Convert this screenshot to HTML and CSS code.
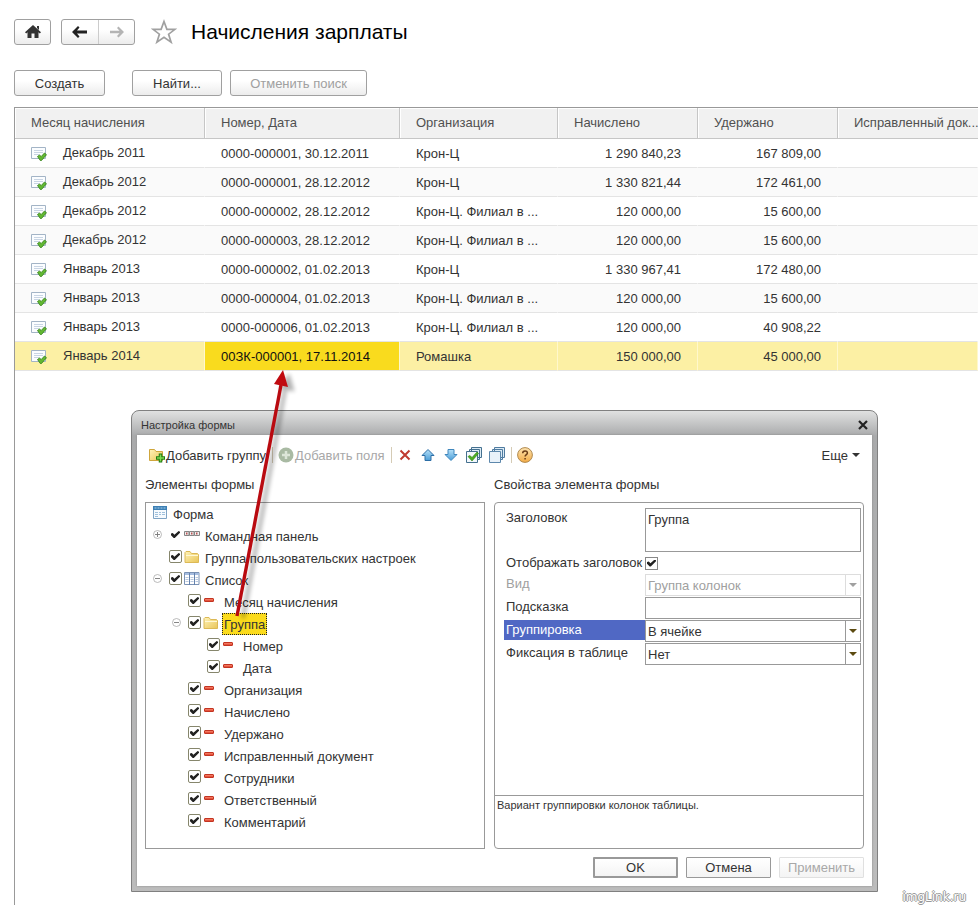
FILE: index.html
```
<!DOCTYPE html>
<html lang="ru">
<head>
    <meta charset="UTF-8">
    <meta name="viewport" content="width=device-width, initial-scale=1.0">
    <title>Начисления зарплаты</title>
    <link rel="stylesheet" href="styles.css">
</head>
<body>

    <svg class="sprite" width="0" height="0" aria-hidden="true">
        <defs>
            <linearGradient id="gFolder" x1="0" y1="0" x2="1" y2="1">
                <stop offset="0" stop-color="#fff3b8"/>
                <stop offset="1" stop-color="#e9c558"/>
            </linearGradient>
            <linearGradient id="gBlue" x1="0" y1="0" x2="0" y2="1">
                <stop offset="0" stop-color="#b5e0f8"/>
                <stop offset="1" stop-color="#4b9ed8"/>
            </linearGradient>
            <linearGradient id="gRed" x1="0" y1="0" x2="0" y2="1">
                <stop offset="0" stop-color="#ff9a80"/>
                <stop offset="1" stop-color="#d8321c"/>
            </linearGradient>
            <linearGradient id="gHelp" x1="0" y1="0" x2="0" y2="1">
                <stop offset="0" stop-color="#fde3b0"/>
                <stop offset="1" stop-color="#f3ab45"/>
            </linearGradient>
        </defs>
        <symbol id="doc" viewBox="0 0 16 14">
            <path d="M.5 .5h14v11h-14z" fill="#fbfdff" stroke="#a3b4c6"/>
            <path d="M3 3.500h9M3 5.500h9M3 7.500h5" stroke="#c9d5e4"/>
            <path d="M6.500 9.500l2-1.500 1.700 1.500 3.300-3.500 2 1.700-5 5.800h-1.200z" fill="#62b832" stroke="#2f7d14" stroke-width=".8"/>
        </symbol>
        <symbol id="folder" viewBox="0 0 16 14">
            <path d="M1 12.500V2.500l1-1h4l1.500 2h6l1 1v8z" fill="url(#gFolder)" stroke="#dcb956"/>
            <path d="M2 5.500h12" stroke="#fff8d6"/>
        </symbol>
        <symbol id="bar" viewBox="0 0 16 14">
            <rect x="1.500" y="4.500" width="9" height="3" rx=".5" fill="url(#gRed)" stroke="#c33422"/>
        </symbol>
        <symbol id="form" viewBox="0 0 16 14">
            <path d="M1.500 .5h13v12h-13z" fill="#f6fafe" stroke="#7fa3c4"/>
            <path d="M1 0h14v4H1z" fill="#3c7fb4"/>
            <path d="M2.500 2h11" stroke="#a8d3ee" stroke-dasharray="2 1"/>
            <path d="M3 6.500h3M7 6.500h2M10 6.500h3M3 8.500h3M7 8.500h2M10 8.500h3M3 10.500h3" stroke="#9fc0dc"/>
        </symbol>
        <symbol id="panel" viewBox="0 0 16 14">
            <path d="M.5 3.500h4.500v4h-4.500zM5.500 3.500h4.500v4h-4.500zM10.500 3.500h5v4h-5z" fill="#eee" stroke="#858585"/>
            <path d="M2 5.500h1.500M7 5.500h1.500M12 5.500h1.500" stroke="#b55" stroke-width="2"/>
        </symbol>
        <symbol id="list" viewBox="0 0 16 14">
            <path d="M.5 .5h14.500v12h-14.500z" fill="#fff" stroke="#7b92b4"/>
            <path d="M1 1h14v2H1z" fill="#a6bde0"/>
            <path d="M5.500 1v12M10.500 1v12" stroke="#6482ad"/>
            <path d="M1.500 5.500h3M6.500 5.500h3M11.500 5.500h3M1.500 7.500h3M6.500 7.500h3M11.500 7.500h3M1.500 9.500h3M6.500 9.500h3M11.500 9.500h3" stroke="#b9c8de"/>
        </symbol>
        <symbol id="plus" viewBox="0 0 9 9">
            <circle cx="4.500" cy="4.500" r="4" fill="#fff" stroke="#aaa" stroke-width=".8"/>
            <path d="M2 4.500h5M4.500 2v5" stroke="#777" stroke-width=".9"/>
        </symbol>
        <symbol id="minus" viewBox="0 0 9 9">
            <circle cx="4.500" cy="4.500" r="4" fill="#fff" stroke="#aaa" stroke-width=".8"/>
            <path d="M2 4.500h5" stroke="#777" stroke-width=".9"/>
        </symbol>
        <symbol id="caret" viewBox="0 0 8 4">
            <path d="M0 0h8l-4 4z" fill="currentColor"/>
        </symbol>
    </svg>

    <header class="topbar">
        <button class="btn nav-btn" aria-label="Домой">
            <svg width="16" height="14" viewBox="0 0 16 14"><path d="M8 0l8 7.200-1.200 1.200-1.300-1.100V13H9.500V8.500h-3V13h-4V7.300L1.200 8.400 0 7.200zM12 1h2v4l-2-2z" fill="#333"/></svg>
        </button>
        <div class="nav-pair">
            <button aria-label="Назад">
                <svg width="16" height="12" viewBox="0 0 16 12"><path d="M6 0L0 6l6 6 1.500-1.500L5 7.500h10v-3H5L7.500 1.500z" fill="#222"/></svg>
            </button>
            <button aria-label="Вперед" disabled>
                <svg width="16" height="12" viewBox="0 0 16 12"><path d="M9.500 0.500L15 6l-5.500 5.500L8 10l2.500-2.800H1V4.800h9.500L8 2z" fill="#b4b4b4"/></svg>
            </button>
        </div>
        <svg class="star" width="26" height="26" viewBox="0 0 26 26"><path d="M13 2.500l2.900 7.800h8.100l-6.400 4.900 2.500 8-7.100-4.900-7.100 4.900 2.500-8L2 10.300h8.100z" fill="#fff" stroke="#a0a0a0" stroke-width="1.700"/></svg>
        <h1>Начисления зарплаты</h1>
    </header>

    <div class="commands">
        <button class="btn create">Создать</button>
        <button class="btn find">Найти...</button>
        <button class="btn cancel-find" disabled>Отменить поиск</button>
    </div>

    <main class="list">
        <table>
            <colgroup>
                <col class="c-month">
                <col class="c-number">
                <col class="c-org">
                <col class="c-sum">
                <col class="c-sum">
                <col>
            </colgroup>
            <thead>
                <tr>
                    <th>Месяц начисления</th>
                    <th>Номер, Дата</th>
                    <th>Организация</th>
                    <th>Начислено</th>
                    <th>Удержано</th>
                    <th class="last">Исправленный док...</th>
                </tr>
            </thead>
            <tbody>
                <tr>
                    <td><svg class="doc"><use href="#doc"/></svg>Декабрь 2011</td>
                    <td>0000-000001, 30.12.2011</td>
                    <td>Крон-Ц</td>
                    <td class="num">1 290 840,23</td>
                    <td class="num">167 809,00</td>
                    <td></td>
                </tr>
                <tr>
                    <td><svg class="doc"><use href="#doc"/></svg>Декабрь 2012</td>
                    <td>0000-000001, 28.12.2012</td>
                    <td>Крон-Ц</td>
                    <td class="num">1 330 821,44</td>
                    <td class="num">172 461,00</td>
                    <td></td>
                </tr>
                <tr>
                    <td><svg class="doc"><use href="#doc"/></svg>Декабрь 2012</td>
                    <td>0000-000002, 28.12.2012</td>
                    <td>Крон-Ц. Филиал в ...</td>
                    <td class="num">120 000,00</td>
                    <td class="num">15 600,00</td>
                    <td></td>
                </tr>
                <tr>
                    <td><svg class="doc"><use href="#doc"/></svg>Декабрь 2012</td>
                    <td>0000-000003, 28.12.2012</td>
                    <td>Крон-Ц. Филиал в ...</td>
                    <td class="num">120 000,00</td>
                    <td class="num">15 600,00</td>
                    <td></td>
                </tr>
                <tr>
                    <td><svg class="doc"><use href="#doc"/></svg>Январь 2013</td>
                    <td>0000-000002, 01.02.2013</td>
                    <td>Крон-Ц</td>
                    <td class="num">1 330 967,41</td>
                    <td class="num">172 480,00</td>
                    <td></td>
                </tr>
                <tr>
                    <td><svg class="doc"><use href="#doc"/></svg>Январь 2013</td>
                    <td>0000-000004, 01.02.2013</td>
                    <td>Крон-Ц. Филиал в ...</td>
                    <td class="num">120 000,00</td>
                    <td class="num">15 600,00</td>
                    <td></td>
                </tr>
                <tr>
                    <td><svg class="doc"><use href="#doc"/></svg>Январь 2013</td>
                    <td>0000-000006, 01.02.2013</td>
                    <td>Крон-Ц. Филиал в ...</td>
                    <td class="num">120 000,00</td>
                    <td class="num">40 908,22</td>
                    <td></td>
                </tr>
                <tr class="selected">
                    <td><svg class="doc"><use href="#doc"/></svg>Январь 2014</td>
                    <td class="current">00ЗК-000001, 17.11.2014</td>
                    <td>Ромашка</td>
                    <td class="num">150 000,00</td>
                    <td class="num">45 000,00</td>
                    <td></td>
                </tr>
            </tbody>
        </table>
    </main>

    <section class="dialog" role="dialog" aria-labelledby="dialogTitle">
        <div class="dialog-title">
            <span id="dialogTitle">Настройка формы</span>
            <button class="close" aria-label="Закрыть">
                <svg width="10" height="10" viewBox="0 0 10 10"><path d="M1 1l8 8M9 1l-8 8" stroke="#222" stroke-width="2.200"/></svg>
            </button>
        </div>

        <div class="dialog-body">
            <div class="toolbar">
                <button class="tool">
                    <svg width="16" height="16" viewBox="0 0 16 16"><path d="M.5 13.500v-11h5l1.500 2h6.500v9z" fill="url(#gFolder)" stroke="#cfa63c"/><path d="M11.500 6.500v9M7 11h9" stroke="#1f7a12" stroke-width="3.500"/><path d="M11.500 7.500v7M8 11h7" stroke="#7fdc50" stroke-width="1.500"/></svg>
                    <span>Добавить группу</span>
                </button>
                <i class="sep"></i>
                <button class="tool" disabled>
                    <svg width="16" height="16" viewBox="0 0 16 16"><circle cx="8" cy="8" r="7.500" fill="#a9baa3"/><path d="M8 4v8M4 8h8" stroke="#dce6d8" stroke-width="2.500"/></svg>
                    <span>Добавить поля</span>
                </button>
                <i class="sep"></i>
                <div class="tool-icons">
                    <button class="tool" aria-label="Удалить">
                        <svg width="16" height="16" viewBox="0 0 16 16"><path d="M3.500 3.500l9 9M12.500 3.500l-9 9" stroke="#c03a30" stroke-width="2"/></svg>
                    </button>
                    <button class="tool" aria-label="Вверх">
                        <svg width="16" height="16" viewBox="0 0 16 16"><path d="M8 2.500l6 6h-3v5H5v-5H2z" fill="url(#gBlue)" stroke="#2c6ea6"/></svg>
                    </button>
                    <button class="tool" aria-label="Вниз">
                        <svg width="16" height="16" viewBox="0 0 16 16"><path d="M8 13.500l6-6h-3v-5H5v5H2z" fill="url(#gBlue)" stroke="#4087bd"/></svg>
                    </button>
                    <button class="tool" aria-label="Установить флажки">
                        <svg width="16" height="16" viewBox="0 0 16 16"><path d="M5.500 .5h10v10h-10zM3.500 2.500h10v10h-10z" fill="#dcebf5" stroke="#44708f"/><path d="M.5 4.500h11v11H.5z" fill="#f3f8fc" stroke="#44708f"/><path d="M2 9.500l2-1 2 2 5-5.500 1.500 1.500L6 14z" fill="#4cae24" stroke="#2d7d12" stroke-width=".6"/></svg>
                    </button>
                    <button class="tool" aria-label="Снять флажки">
                        <svg width="16" height="16" viewBox="0 0 16 16"><path d="M5.500 .5h10v10h-10zM3.500 2.500h10v10h-10z" fill="#dcebf5" stroke="#4f7ba0"/><path d="M.5 4.500h11v11H.5z" fill="#e9f2fa" stroke="#5d88ac"/></svg>
                    </button>
                </div>
                <i class="sep"></i>
                <button class="tool" aria-label="Справка">
                    <svg width="16" height="16" viewBox="0 0 16 16"><circle cx="8" cy="8" r="7.400" fill="url(#gHelp)" stroke="#b08a50"/><path d="M5.700 6.200c0-3 4.700-3 4.700-.2 0 1.700-2.300 1.700-2.300 3.600M8.100 11v1.600" fill="none" stroke="#6b3d16" stroke-width="1.500"/></svg>
                </button>
                <button class="tool more">Еще <svg class="caret"><use href="#caret"/></svg></button>
            </div>

            <div class="panes">
                <div class="pane">
                    <h2>Элементы формы</h2>
                    <ul class="tree">
                        <li class="root"><svg class="ico"><use href="#form"/></svg><span class="name">Форма</span></li>
                        <li class="lvl1"><svg class="exp"><use href="#plus"/></svg><input type="checkbox" class="bare" id="t1" checked><svg class="ico"><use href="#panel"/></svg><label class="name" for="t1">Командная панель</label></li>
                        <li class="lvl1"><i class="exp"></i><input type="checkbox" id="t2" checked><svg class="ico"><use href="#folder"/></svg><label class="name" for="t2">Группа пользовательских настроек</label></li>
                        <li class="lvl1"><svg class="exp"><use href="#minus"/></svg><input type="checkbox" id="t3" checked><svg class="ico"><use href="#list"/></svg><label class="name" for="t3">Список</label></li>
                        <li class="lvl2"><i class="exp"></i><input type="checkbox" id="t4" checked><svg class="ico"><use href="#bar"/></svg><label class="name" for="t4">Месяц начисления</label></li>
                        <li class="lvl2"><svg class="exp"><use href="#minus"/></svg><input type="checkbox" id="t5" checked><svg class="ico"><use href="#folder"/></svg><label class="name active" for="t5">Группа</label></li>
                        <li class="lvl3"><i class="exp"></i><input type="checkbox" id="t6" checked><svg class="ico"><use href="#bar"/></svg><label class="name" for="t6">Номер</label></li>
                        <li class="lvl3"><i class="exp"></i><input type="checkbox" id="t7" checked><svg class="ico"><use href="#bar"/></svg><label class="name" for="t7">Дата</label></li>
                        <li class="lvl2"><i class="exp"></i><input type="checkbox" id="t8" checked><svg class="ico"><use href="#bar"/></svg><label class="name" for="t8">Организация</label></li>
                        <li class="lvl2"><i class="exp"></i><input type="checkbox" id="t9" checked><svg class="ico"><use href="#bar"/></svg><label class="name" for="t9">Начислено</label></li>
                        <li class="lvl2"><i class="exp"></i><input type="checkbox" id="t10" checked><svg class="ico"><use href="#bar"/></svg><label class="name" for="t10">Удержано</label></li>
                        <li class="lvl2"><i class="exp"></i><input type="checkbox" id="t11" checked><svg class="ico"><use href="#bar"/></svg><label class="name" for="t11">Исправленный документ</label></li>
                        <li class="lvl2"><i class="exp"></i><input type="checkbox" id="t12" checked><svg class="ico"><use href="#bar"/></svg><label class="name" for="t12">Сотрудники</label></li>
                        <li class="lvl2"><i class="exp"></i><input type="checkbox" id="t13" checked><svg class="ico"><use href="#bar"/></svg><label class="name" for="t13">Ответственный</label></li>
                        <li class="lvl2"><i class="exp"></i><input type="checkbox" id="t14" checked><svg class="ico"><use href="#bar"/></svg><label class="name" for="t14">Комментарий</label></li>
                    </ul>
                </div>

                <div class="pane">
                    <h2>Свойства элемента формы</h2>
                    <div class="props">
                        <div class="fields-grid">
                            <label for="caption">Заголовок</label>
                            <textarea id="caption">Группа</textarea>
                            <label for="showCaption">Отображать заголовок</label>
                            <input type="checkbox" id="showCaption" class="square" checked>
                            <label class="off" for="kind">Вид</label>
                            <div class="combo off">
                                <select id="kind" disabled><option>Группа колонок</option></select>
                                <span class="drop"><svg class="caret"><use href="#caret"/></svg></span>
                            </div>
                            <label for="hint">Подсказка</label>
                            <input type="text" id="hint">
                            <label class="picked" for="grouping">Группировка</label>
                            <div class="combo">
                                <select id="grouping"><option>В ячейке</option></select>
                                <span class="drop"><svg class="caret"><use href="#caret"/></svg></span>
                            </div>
                            <label for="fixing">Фиксация в таблице</label>
                            <div class="combo">
                                <select id="fixing"><option>Нет</option></select>
                                <span class="drop"><svg class="caret"><use href="#caret"/></svg></span>
                            </div>
                        </div>
                        <p class="about">Вариант группировки колонок таблицы.</p>
                    </div>
                </div>
            </div>

            <div class="dialog-buttons">
                <button class="default">OK</button>
                <button>Отмена</button>
                <button disabled>Применить</button>
            </div>
        </div>
    </section>

    <svg class="arrow" width="80" height="270" viewBox="0 0 80 270" aria-hidden="true">
        <g class="arrow-shade">
            <path d="M18 253L60 24" stroke-width="4"/>
            <path d="M64 9l5 17-14-3z"/>
        </g>
        <path d="M12 251L56 20" stroke="#b90a10" stroke-width="3.400"/>
        <path d="M58 5l5 17-14-3z" fill="#c00a10"/>
    </svg>

    <div class="watermark">imgLink.ru</div>

</body>
</html>
```
FILE: styles.css
```
* {
    box-sizing: border-box;
}

body {
    margin: 0;
    min-height: 100vh;
    display: flex;
    flex-direction: column;
    padding: 19px 0 0 14px;
    background-color: #fff;
    color: #333;
    font-family: "Liberation Sans", Arial, sans-serif;
    font-size: 13px;
    overflow-x: hidden;
    position: relative;
}

button, input, select, textarea {
    font: inherit;
    color: inherit;
    margin: 0;
}

svg {
    display: block;
    flex: none;
}

.sprite {
    position: absolute;
}

/* top bar */

.topbar {
    display: flex;
    align-items: center;
    height: 26px;
}

.topbar h1 {
    margin: 0 0 0 14px;
    font-size: 21px;
    font-weight: normal;
    color: #000;
}

.btn, .nav-pair {
    border: 1px solid #a0a0a0;
    border-radius: 3px;
    background: linear-gradient(#fff 40%, #ececec);
}

.btn {
    height: 26px;
    padding: 0 10px;
    white-space: nowrap;
}

.btn:disabled {
    color: #a0a0a0;
}

.nav-btn {
    width: 37px;
}

.nav-pair {
    display: flex;
    height: 26px;
    margin-left: 10px;
}

.nav-pair button {
    width: 36px;
    padding: 0 10px;
    border: 0;
    background: none;
}

.nav-pair button + button {
    border-left: 1px solid #ccc;
}

.star {
    margin-left: 16px;
}

.commands {
    display: flex;
    margin: 25px 0 11px;
}

.create {
    width: 91px;
    margin-right: 27px;
}

.find {
    width: 90px;
    margin-right: 8px;
}

.cancel-find {
    width: 137px;
}

/* list */

.list {
    flex: 1;
    border-top: 1px solid #999;
    border-left: 1px solid #999;
}

table {
    width: 100%;
    table-layout: fixed;
    border-collapse: separate;
    border-spacing: 0;
}

.c-month {
    width: 190px;
}

.c-number {
    width: 195px;
}

.c-org {
    width: 158px;
}

.c-sum {
    width: 140px;
}

th, td {
    padding: 0 16px;
    white-space: nowrap;
    overflow: hidden;
}

th {
    height: 31px;
    padding-bottom: 2px;
    background-color: #f1f1f1;
    border-right: 1px solid #c6c6c6;
    border-bottom: 1px solid #c6c6c6;
    box-shadow: inset 1px 1px #fff;
    color: #505050;
    font-weight: normal;
    text-align: left;
}

th.last {
    padding-right: 0;
    border-right: 0;
}

td {
    height: 29px;
    border-right: 1px solid transparent;
    border-bottom: 1px solid #e4e4e4;
}

tbody tr:nth-child(even) {
    background-color: #fafafa;
}

tbody tr.selected {
    background-color: #fcf0a4;
}

.selected td {
    border-right-color: #fff8cc;
}

.selected td.current {
    background-color: #f9db1e;
    color: #111;
}

.num {
    text-align: right;
}

.doc {
    display: inline-block;
    width: 16px;
    height: 14px;
    margin-right: 16px;
    vertical-align: -4px;
}

/* dialog window */

.dialog {
    position: absolute;
    left: 131px;
    right: 100px;
    top: 410px;
    padding: 0 5px 5px;
    border: 1px solid #808080;
    border-radius: 8px 8px 0 0;
    background: linear-gradient(#e0e1e1, #a9aaab 25px, #bcbcbc);
}

.dialog-title {
    display: flex;
    justify-content: space-between;
    align-items: center;
    height: 24px;
    padding: 3px 4px 0;
    font-size: 11px;
}

.close {
    padding: 0;
    border: 0;
    background: none;
}

.dialog-body {
    padding: 10px 8px 8px;
    background-color: #fff;
    box-shadow: 0 0 2px #888;
}

.toolbar {
    display: flex;
    align-items: center;
    height: 20px;
    padding-left: 4px;
}

.tool {
    display: flex;
    align-items: center;
    gap: 1px;
    padding: 0;
    border: 0;
    background: none;
    white-space: nowrap;
}

.tool:disabled {
    color: #a8a8a8;
}

.sep {
    width: 1px;
    height: 16px;
    margin: 0 5px 0 6px;
    background-color: #d5cbb5;
}

.tool-icons {
    display: flex;
    gap: 7px;
}

.more {
    gap: 4px;
    margin: 0 4px 0 auto;
}

.caret {
    width: 8px;
    height: 4px;
}

.panes {
    display: grid;
    grid-template-columns: 340fr 370fr;
    gap: 9px;
}

.pane {
    display: flex;
    flex-direction: column;
}

.pane h2 {
    margin: 12px 0 9px;
    font-size: 13px;
    line-height: 16px;
    font-weight: normal;
}

.tree, .props {
    flex: 1;
    margin: 0;
    border: 1px solid #999;
}

.tree {
    min-height: 347px;
    padding: 0;
    list-style: none;
}

.tree li {
    display: flex;
    align-items: flex-start;
    height: 22px;
}

.root {
    padding-left: 4px;
}

.lvl1 {
    padding-left: 7px;
}

.lvl2 {
    padding-left: 26px;
}

.lvl3 {
    padding-left: 45px;
}

.exp {
    width: 9px;
    height: 9px;
    margin: 5px 7px 0 0;
}

.ico {
    width: 16px;
    height: 14px;
    margin: 3px 3px 0 2px;
}

.name {
    height: 22px;
    padding: 0 1px;
    border: 1px solid transparent;
    line-height: 21px;
}

.name.active {
    background-color: #fbdb1c;
    border: 1px dotted #222;
}

input[type="checkbox"] {
    appearance: none;
    flex: none;
    display: grid;
    place-items: center;
    width: 13px;
    height: 13px;
    border: 1px solid #86866c;
    border-radius: 2px;
    background-color: #fff;
}

.tree input[type="checkbox"] {
    margin-top: 3px;
}

input[type="checkbox"]:checked::before {
    content: "";
    width: 9px;
    height: 7px;
    background-color: #222;
    clip-path: polygon(0 35%, 20% 30%, 38% 55%, 85% 0, 100% 10%, 100% 25%, 42% 100%, 30% 100%, 0 60%);
}

input[type="checkbox"].bare {
    border-color: transparent;
}

input[type="checkbox"].square {
    align-self: center;
    border-color: #888;
    border-radius: 0;
}

/* element properties */

.props {
    display: flex;
    flex-direction: column;
    border-radius: 4px;
}

.fields-grid {
    flex: 1;
    display: grid;
    grid-template-columns: 141px 1fr;
    grid-template-rows: 44px 20px repeat(4, 22px);
    row-gap: 1px;
    padding: 5px 2px 0 9px;
}

.fields-grid label {
    height: 20px;
    padding-left: 2px;
    line-height: 20px;
    white-space: nowrap;
}

.fields-grid label.off {
    color: #a0a0a0;
}

.fields-grid label.picked {
    background-color: #5068c4;
    color: #fff;
}

textarea, input[type="text"], select {
    width: 100%;
    border: 1px solid #999;
    border-radius: 0;
    background-color: #fff;
    padding: 0 2px;
}

textarea {
    padding-top: 3px;
    resize: none;
    line-height: 16px;
}

.combo {
    display: flex;
    border: 1px solid #999;
}

.combo select {
    flex: 1;
    border: 0;
    appearance: none;
    opacity: 1;
}

.drop {
    display: flex;
    align-items: center;
    justify-content: center;
    width: 15px;
    border-left: 1px solid #999;
    color: #5c4a10;
}

.combo.off, .combo.off .drop {
    border-color: #ddd;
    color: #a0a0a0;
}

.about {
    height: 53px;
    margin: 0;
    padding: 3px 2px;
    border-top: 1px solid #999;
    font-size: 11px;
}

.dialog-buttons {
    display: flex;
    justify-content: flex-end;
    gap: 8px;
    margin-top: 8px;
}

.dialog-buttons button {
    width: 85px;
    height: 21px;
    padding: 0;
    border: 1px solid #999;
    border-radius: 1px;
    background: linear-gradient(#fff, #f4f4f4);
}

.dialog-buttons .default {
    border: 2px solid #999;
}

.dialog-buttons button:disabled {
    border-color: #e0e0e0;
    color: #a8a8a8;
}

/* pointer between the group and its column */

.arrow {
    position: absolute;
    left: 225px;
    top: 365px;
    pointer-events: none;
}

.arrow-shade {
    fill: #000;
    stroke: #000;
    opacity: .3;
    filter: blur(2px);
}

.watermark {
    position: absolute;
    right: 12px;
    bottom: 0;
    color: #fff;
    font-family: "DejaVu Sans", sans-serif;
    font-size: 12px;
    line-height: 16px;
    text-shadow: 1px 0 #999, -1px 0 #999, 0 1px #999, 0 -1px #999;
}
```
